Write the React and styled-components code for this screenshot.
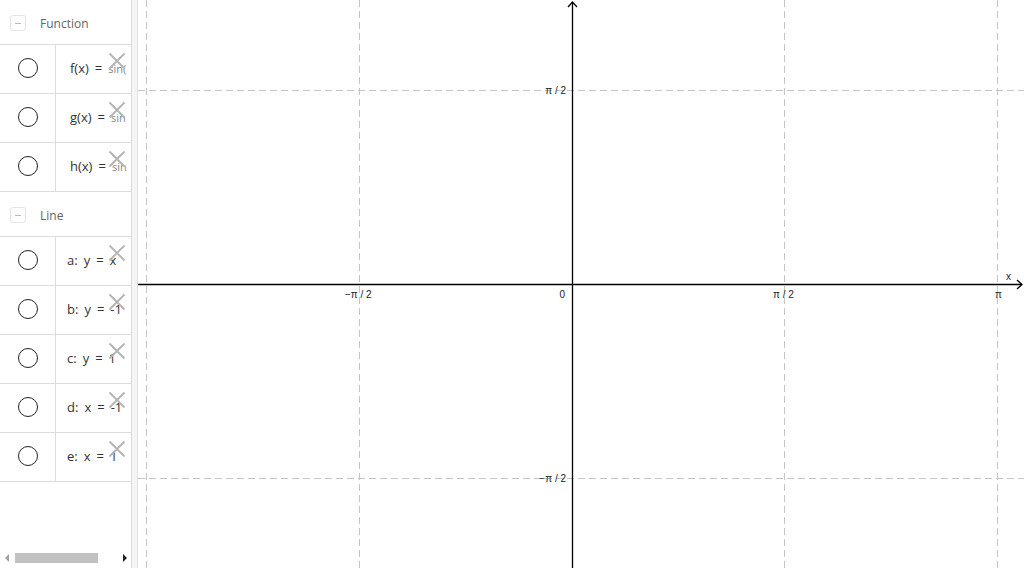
import React from "react";
import styled, { createGlobalStyle } from "styled-components";

const GlobalStyle = createGlobalStyle`
  html, body {
    margin: 0;
    padding: 0;
    background: #fff;
    overflow: hidden;
  }
  body {
    font-family: "Open Sans", "Liberation Sans", sans-serif;
  }
`;

const Layout = styled.div`
  display: flex;
  width: 1024px;
  height: 568px;
  overflow: hidden;
`;

const Sidebar = styled.aside`
  width: 131px;
  flex-shrink: 0;
  display: flex;
  flex-direction: column;
  overflow: hidden;
  background: #fff;
`;

const Divider = styled.div`
  width: 5px;
  flex-shrink: 0;
  background: #f5f5f5;
  border-left: 1px solid #dadada;
  border-right: 1px solid #e2e2e2;
`;

const Graphics = styled.main`
  flex: 1;
  & > svg {
    display: block;
  }
`;

const GroupHeader = styled.div`
  height: ${(p) => p.$h}px;
  display: flex;
  align-items: center;
  padding-left: 10px;
  padding-top: 2px;
  box-sizing: border-box;
  gap: 14px;
  border-bottom: 1px solid #dcdcdc;
  color: #666;
  font-size: 12px;
`;

const Collapse = styled.span`
  width: 14px;
  height: 14px;
  border: 1px solid #e4e4e4;
  border-radius: 3px;
  position: relative;
  &::after {
    content: "";
    position: absolute;
    left: 4px;
    right: 4px;
    top: 6.5px;
    height: 1px;
    background: #bbb;
  }
`;

const Row = styled.div`
  height: 48px;
  display: grid;
  grid-template-columns: 56px 1fr;
  border-bottom: 1px solid #dcdcdc;
  position: relative;
`;

const MarkerCell = styled.div`
  border-right: 1px solid #dcdcdc;
  display: flex;
  align-items: center;
  justify-content: center;
  padding-bottom: 2px;
`;

const Marker = styled.span`
  width: 20px;
  height: 20px;
  border: 1.3px solid #222;
  border-radius: 50%;
  box-sizing: border-box;
`;

const Formula = styled.div`
  display: flex;
  align-items: center;
  padding-left: ${(p) => p.$pad}px;
  padding-bottom: 2px;
  font-size: 13px;
  color: #333;
  white-space: nowrap;
  overflow: hidden;
  gap: 6px;
`;

const Sub = styled.span`
  font-size: 11px;
  color: #888;
  margin-top: 1px;
`;

const Remove = styled.svg`
  position: absolute;
  top: 7px;
  right: 5px;
  width: 18px;
  height: 18px;
`;

const Scrollbar = styled.div`
  margin-top: auto;
  margin-bottom: 4px;
  height: 12px;
  display: flex;
  align-items: center;
  padding: 0 4px 0 5px;
  gap: 6px;
`;

const Arrow = styled.span`
  width: 0;
  height: 0;
  border-top: 4px solid transparent;
  border-bottom: 4px solid transparent;
  ${(p) =>
    p.$dir === "left"
      ? "border-right: 4px solid #a0a0a0;"
      : "border-left: 4px solid #222; margin-left: auto;"}
`;

const Thumb = styled.span`
  width: 83px;
  height: 10px;
  background: #c1c1c1;
`;

const CloseIcon = () => (
  <Remove viewBox="0 0 18 18">
    <path d="M1.5 1.5 L16.5 16.5 M16.5 1.5 L1.5 16.5" stroke="#b4b4b4" strokeWidth="1.8" fill="none" />
  </Remove>
);

const functions = [
  { name: "f(x)", rest: "sin(" },
  { name: "g(x)", rest: "sin" },
  { name: "h(x)", rest: "sin" },
];

const lines = ["a: y = x", "b: y = -1", "c: y = 1", "d: x = -1", "e: x = 1"];

const W = 886;
const H = 568;
const OX = 434;
const OY = 284;
const gridX = [8, 221, 646, 859];
const gridY = [90, 478];

const Plot = () => (
  <svg width={W} height={H}>
    <g stroke="#c4c4c4" strokeWidth="1" strokeDasharray="7 4">
      {gridX.map((x) => (
        <line key={x} x1={x + 0.5} y1={0} x2={x + 0.5} y2={H} />
      ))}
      {gridY.map((y) => (
        <line key={y} x1={0} y1={y + 0.5} x2={W} y2={y + 0.5} />
      ))}
    </g>
    <g stroke="#000" strokeWidth="1.3" fill="none">
      <line x1={0} y1={OY + 0.5} x2={W - 2} y2={OY + 0.5} />
      <line x1={OX + 0.5} y1={2} x2={OX + 0.5} y2={H} />
      <path d={`M${W - 7} ${OY - 4} L${W - 2} ${OY + 0.5} L${W - 7} ${OY + 5}`} />
      <path d={`M${OX - 4} 7 L${OX + 0.5} 2 L${OX + 5} 7`} />
    </g>
    <g fill="#222" fontSize="10" fontFamily="'Liberation Sans', Arial, sans-serif">
      <text x={OX - 6} y={94} textAnchor="end">π / 2</text>
      <text x={OX - 6} y={482} textAnchor="end">−π / 2</text>
      <text x={207} y={298}>−π / 2</text>
      <text x={OX - 7} y={298} textAnchor="end">0</text>
      <text x={635} y={298}>π / 2</text>
      <text x={857} y={298}>π</text>
      <text x={868} y={280}>x</text>
    </g>
  </svg>
);

export default function App() {
  return (
    <>
      <GlobalStyle />
      <Layout>
        <Sidebar>
          <GroupHeader $h={45}>
            <Collapse />
            Function
          </GroupHeader>
          {functions.map((f) => (
            <Row key={f.name}>
              <MarkerCell>
                <Marker />
              </MarkerCell>
              <Formula $pad={14}>
                <span>{f.name}</span>
                <span>=</span>
                <Sub>{f.rest}</Sub>
              </Formula>
              <CloseIcon />
            </Row>
          ))}
          <GroupHeader $h={45}>
            <Collapse />
            Line
          </GroupHeader>
          {lines.map((l) => (
            <Row key={l}>
              <MarkerCell>
                <Marker />
              </MarkerCell>
              <Formula $pad={11}>
                {l.split(" ").map((t, i) => (
                  <span key={i}>{t}</span>
                ))}
              </Formula>
              <CloseIcon />
            </Row>
          ))}
          <Scrollbar>
            <Arrow $dir="left" />
            <Thumb />
            <Arrow $dir="right" />
          </Scrollbar>
        </Sidebar>
        <Divider />
        <Graphics>
          <Plot />
        </Graphics>
      </Layout>
    </>
  );
}
